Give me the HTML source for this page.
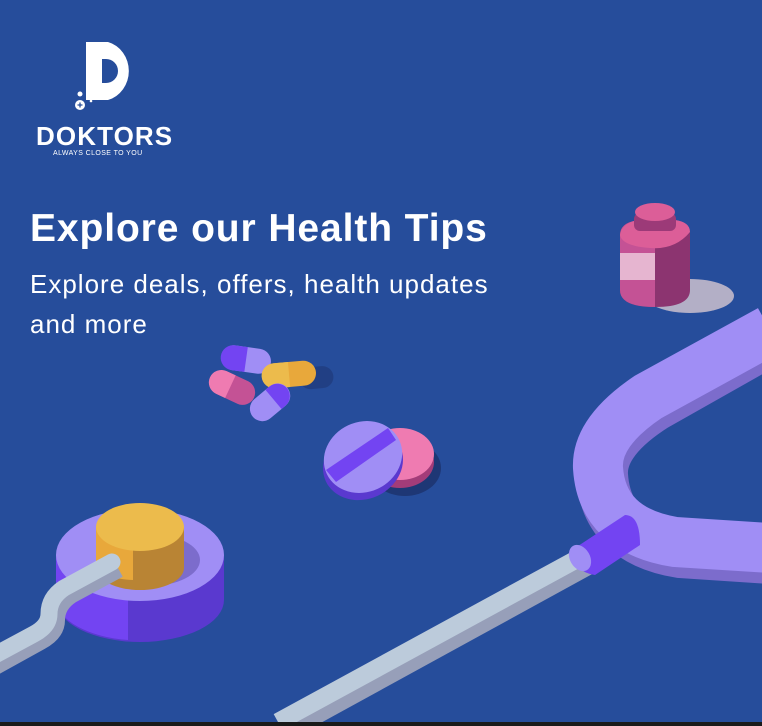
<!DOCTYPE html>
<html><head><meta charset="utf-8"><style>
html,body{margin:0;padding:0}
body{width:762px;height:726px;background:#264d9b;position:relative;overflow:hidden;font-family:"Liberation Sans",Arial,sans-serif}
svg{position:absolute;left:0;top:0}
.t{position:absolute;left:30px;color:#fff;white-space:nowrap}
</style></head><body>
<svg width="762" height="726" viewBox="0 0 762 726">
<!-- logo -->
<path d="M86 42 H108 A28 30 0 0 1 108 100 H99 V83 H106 A12 12 0 0 0 106 59 H102 V100 H86 Z" fill="#fff"/>
<circle cx="80" cy="94" r="2.5" fill="#fff"/>
<circle cx="80" cy="105" r="5" fill="#fff"/>
<path d="M77.5 105h5M80 102.5v5" stroke="#264d9b" stroke-width="1.3"/>
<circle cx="91" cy="101" r="1.3" fill="#fff"/>
<!-- bottle shadow -->
<ellipse cx="690" cy="296" rx="44" ry="17" fill="#b3afc6"/>
<!-- bottle -->
<path d="M620 235 Q620 222 640 220 H675 Q690 222 690 235 V290 Q690 307 655 307 Q620 307 620 290 Z" fill="#8c3470"/>
<path d="M620 235 Q620 222 640 220 H655 V307 Q620 307 620 290 Z" fill="#c45295"/>
<path d="M620 235 Q622 222 640 220 H675 Q690 222 690 232 Q675 250 650 248 Q622 246 620 235Z" fill="#dc5e98"/>
<rect x="620" y="253" width="35" height="27" fill="#e6b5d0"/>
<rect x="634" y="213" width="42" height="18" rx="6" fill="#9c3a78"/>
<ellipse cx="655" cy="212" rx="20" ry="9" fill="#dc5e98"/>
<!-- big U tube -->
<path d="M770 340 L655 405 Q600 440 602 475 Q606 540 680 552 L770 558" fill="none" stroke="#7c6ccc" stroke-width="52"/>
<path d="M770 330 L648 397 Q596 432 598 468 Q602 530 675 542 L770 548" fill="none" stroke="#a08ef5" stroke-width="50"/>
<!-- long tube -->
<path d="M285 730 L595 560" stroke="#979fb9" stroke-width="22" fill="none"/>
<path d="M278 722 L590 552" stroke="#bccbdb" stroke-width="18" fill="none"/>
<!-- connector -->
<path d="M575 548 L625 515 Q640 515 640 545 L595 575 Q572 572 575 548Z" fill="#7344f2"/>
<ellipse cx="580" cy="558" rx="10" ry="14" fill="#a08ef5" transform="rotate(-30 580 558)"/>
<!-- chest piece -->
<path d="M56 555 V600 A84 42 0 0 0 224 600 V555 Z" fill="#5a39cf"/>
<path d="M56 555 V600 A84 42 0 0 0 128 640 V555 Z" fill="#7344f2"/>
<ellipse cx="140" cy="555" rx="84" ry="46" fill="#a08ef5"/>
<ellipse cx="150" cy="560" rx="50" ry="26" fill="#7c6ccc"/>
<path d="M96 527 V568 A44 22 0 0 0 184 568 V527 Z" fill="#b98434"/>
<path d="M96 527 V568 A44 22 0 0 0 133 580 V527 Z" fill="#e8a83b"/>
<ellipse cx="140" cy="527" rx="44" ry="24" fill="#ecbb4c"/>
<!-- tube from chest piece -->
<path d="M118 568 L70 594 Q55 604 55 620 Q55 632 40 640 L-5 665" fill="none" stroke="#979fb9" stroke-width="20"/>
<path d="M112 562 L64 588 Q49 598 49 614 Q49 626 34 634 L-5 655" fill="none" stroke="#bccbdb" stroke-width="17" stroke-linecap="round"/>
<!-- tablets -->
<ellipse cx="405" cy="468" rx="36" ry="28" fill="#1e3775"/>
<ellipse cx="400" cy="462" rx="34" ry="26" fill="#a33c79"/>
<ellipse cx="400" cy="454" rx="34" ry="26" fill="#ef7bb1"/>
<ellipse cx="363" cy="464" rx="41" ry="35" fill="#5a39cf" transform="rotate(-25 363 464)"/>
<ellipse cx="363" cy="457" rx="40" ry="35" fill="#a08ef5" transform="rotate(-25 363 457)"/>
<path d="M326 470 L388 428 L396 440 L336 482Z" fill="#7344f2"/>
<!-- capsules -->
<g transform="rotate(8 246 360)"><rect x="221" y="347" width="50" height="25" rx="12.5" fill="#a08ef5"/><path d="M233 347 H246 V372 H233 A12.5 12.5 0 0 1 233 347Z" fill="#7344f2"/></g>
<g transform="rotate(-5 289 374)"><rect x="299" y="369" width="34" height="22" rx="11" fill="#1e3775" opacity=".6"/><rect x="262" y="362" width="54" height="25" rx="12.5" fill="#e8a83b"/><path d="M274 362 H289 V387 H274 A12.5 12.5 0 0 1 274 362Z" fill="#ecbb4c"/></g>
<g transform="rotate(25 232 388)"><rect x="208" y="375" width="48" height="25" rx="12.5" fill="#c45295"/><path d="M220 375 H230 V400 H220 A12.5 12.5 0 0 1 220 375Z" fill="#ef7bb1"/></g>
<g transform="rotate(-40 270 403)"><rect x="248" y="390" width="45" height="25" rx="12.5" fill="#a08ef5"/><path d="M275 390 H280 A12.5 12.5 0 0 1 280 415 H275Z" fill="#7344f2"/></g>
<rect x="0" y="722" width="762" height="4" fill="#1a1a1a"/>
</svg>
<div style="position:absolute;left:36px;top:121px;color:#fff;font-weight:bold;font-size:26px;letter-spacing:1.1px">DOKTORS</div>
<div style="position:absolute;left:53px;top:150px;color:#fff;font-size:7px;letter-spacing:.4px">ALWAYS CLOSE TO YOU</div>
<div class="t" style="top:207px;font-size:39px;font-weight:bold;letter-spacing:0.9px">Explore our Health Tips</div>
<div class="t" style="top:264px;font-size:26px;line-height:40px;letter-spacing:1px">Explore deals, offers, health updates<br>and more</div>
</body></html>
